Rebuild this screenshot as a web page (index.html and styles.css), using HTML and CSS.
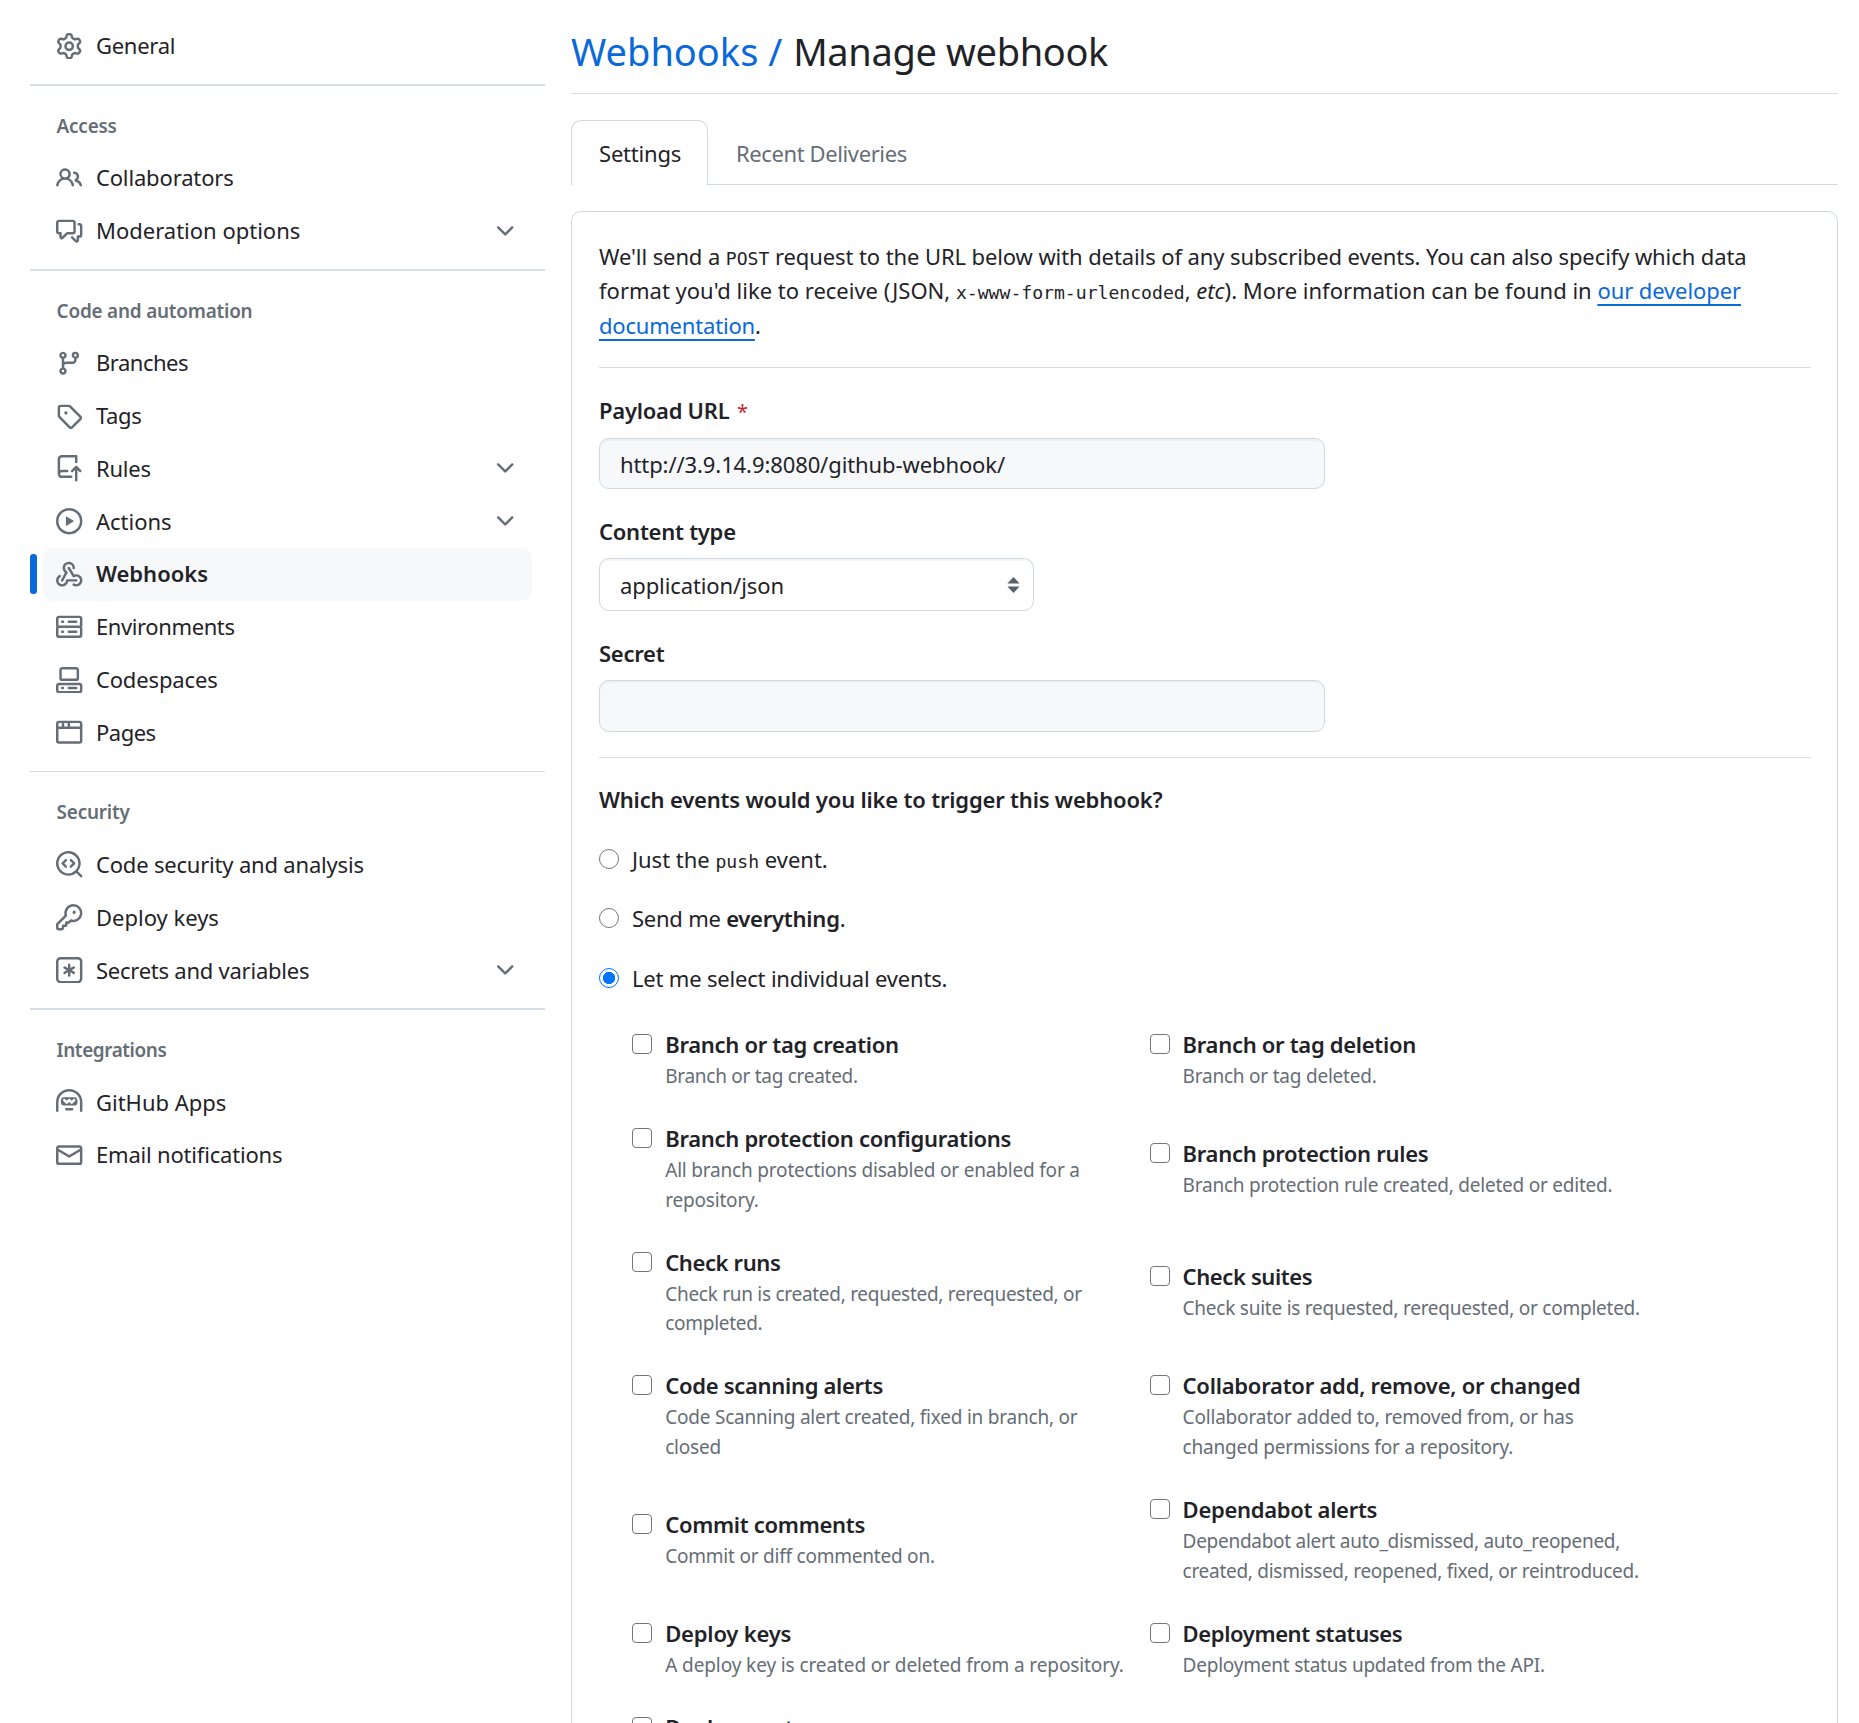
FILE: index.html
```html
<!DOCTYPE html>
<html lang="en">
<head>
<meta charset="utf-8">
<title>Webhooks · Manage webhook</title>
<link rel="stylesheet" href="styles.css">
</head>
<body>
<div class="layout">
  <nav class="sidebar">
    <ul class="nav-list">
      <li class="nav-item"><svg class="icon" viewBox="0 0 16 16"><path d="M8 0a8.2 8.2 0 0 1 .701.031C9.444.095 9.99.645 10.16 1.29l.288 1.107c.018.066.079.158.212.224.231.114.454.243.668.386.123.082.233.09.299.071l1.103-.303c.644-.176 1.392.021 1.82.63.27.385.506.792.704 1.218.315.675.111 1.422-.364 1.891l-.814.806c-.049.048-.098.147-.088.294.016.257.016.515 0 .772-.01.147.038.246.088.294l.814.806c.475.469.679 1.216.364 1.891a7.977 7.977 0 0 1-.704 1.217c-.428.61-1.176.807-1.82.63l-1.102-.302c-.067-.019-.177-.011-.3.071a5.909 5.909 0 0 1-.668.386c-.133.066-.194.158-.211.224l-.29 1.106c-.168.646-.715 1.196-1.458 1.26a8.006 8.006 0 0 1-1.402 0c-.743-.064-1.289-.614-1.458-1.26l-.289-1.106c-.018-.066-.079-.158-.212-.224a5.738 5.738 0 0 1-.668-.386c-.123-.082-.233-.09-.299-.071l-1.103.303c-.644.176-1.392-.021-1.82-.63a8.12 8.12 0 0 1-.704-1.218c-.315-.675-.111-1.422.363-1.891l.815-.806c.05-.048.098-.147.088-.294a6.214 6.214 0 0 1 0-.772c.01-.147-.038-.246-.088-.294l-.815-.806C.635 6.045.431 5.298.746 4.623a7.92 7.92 0 0 1 .704-1.217c.428-.61 1.176-.807 1.82-.63l1.102.302c.067.019.177.011.3-.071.214-.143.437-.272.668-.386.133-.066.194-.158.211-.224l.29-1.106C6.009.645 6.556.095 7.299.03 7.53.01 7.764 0 8 0Zm-.571 1.525c-.036.003-.108.036-.137.146l-.289 1.105c-.147.561-.549.967-.998 1.189-.173.086-.34.183-.5.29-.417.278-.97.423-1.529.27l-1.103-.303c-.109-.03-.175.016-.195.045-.22.312-.412.644-.573.99-.014.031-.021.11.059.19l.815.806c.411.406.562.957.53 1.456a4.709 4.709 0 0 0 0 .582c.032.499-.119 1.05-.53 1.456l-.815.806c-.081.08-.073.159-.059.19.162.346.353.677.573.989.02.03.085.076.195.046l1.102-.303c.56-.153 1.113-.008 1.53.27.161.107.328.204.501.29.447.222.85.629.997 1.189l.289 1.105c.029.109.101.143.137.146a6.6 6.6 0 0 0 1.142 0c.036-.003.108-.036.137-.146l.289-1.105c.147-.561.549-.967.998-1.189.173-.086.34-.183.5-.29.417-.278.97-.423 1.529-.27l1.103.303c.109.029.175-.016.195-.045.22-.313.411-.644.573-.99.014-.031.021-.11-.059-.19l-.815-.806c-.411-.406-.562-.957-.53-1.456a4.709 4.709 0 0 0 0-.582c-.032-.499.119-1.05.53-1.456l.815-.806c.081-.08.073-.159.059-.19a6.464 6.464 0 0 0-.573-.989c-.02-.03-.085-.076-.195-.046l-1.102.303c-.56.153-1.113.008-1.53-.27a4.44 4.44 0 0 0-.501-.29c-.447-.222-.85-.629-.997-1.189l-.289-1.105c-.029-.11-.101-.143-.137-.146a6.6 6.6 0 0 0-1.142 0ZM11 8a3 3 0 1 1-6 0 3 3 0 0 1 6 0ZM9.5 8a1.5 1.5 0 1 0-3.001.001A1.5 1.5 0 0 0 9.5 8Z"/></svg><span class="nav-label tight-3">General</span></li>
    </ul>
    <section class="nav-section">
      <h3 class="nav-heading">Access</h3>
      <ul class="nav-list">
        <li class="nav-item"><svg class="icon" viewBox="0 0 16 16"><path d="M2 5.5a3.5 3.5 0 1 1 5.898 2.549 5.508 5.508 0 0 1 3.034 4.084.75.75 0 1 1-1.482.235 4 4 0 0 0-7.9 0 .75.75 0 0 1-1.482-.236A5.507 5.507 0 0 1 3.102 8.05 3.493 3.493 0 0 1 2 5.5ZM11 4a3.001 3.001 0 0 1 2.22 5.018 5.01 5.01 0 0 1 2.56 3.012.749.749 0 0 1-.885.954.752.752 0 0 1-.549-.514 3.507 3.507 0 0 0-2.522-2.372.75.75 0 0 1-.574-.73v-.352a.75.75 0 0 1 .416-.672A1.5 1.5 0 0 0 11 5.5.75.75 0 0 1 11 4Zm-5.5-.5a2 2 0 1 0-.001 3.999A2 2 0 0 0 5.5 3.5Z"/></svg><span class="nav-label">Collaborators</span></li>
        <li class="nav-item"><svg class="icon" viewBox="0 0 16 16"><path d="M1.75 1h8.5c.966 0 1.75.784 1.75 1.75v5.5A1.75 1.75 0 0 1 10.25 10H7.061l-2.574 2.573A1.458 1.458 0 0 1 2 11.543V10h-.25A1.75 1.75 0 0 1 0 8.25v-5.5C0 1.784.784 1 1.75 1ZM1.5 2.75v5.5c0 .138.112.25.25.25h1a.75.75 0 0 1 .75.75v2.19l2.72-2.72a.749.749 0 0 1 .53-.22h3.5a.25.25 0 0 0 .25-.25v-5.5a.25.25 0 0 0-.25-.25h-8.5a.25.25 0 0 0-.25.25Zm13 2a.25.25 0 0 0-.25-.25h-.5a.75.75 0 0 1 0-1.5h.5c.966 0 1.75.784 1.75 1.75v5.5A1.75 1.75 0 0 1 14.25 12H14v1.543a1.458 1.458 0 0 1-2.487 1.03L9.22 12.28a.749.749 0 0 1 .326-1.275.749.749 0 0 1 .734.215l2.22 2.22v-2.19a.75.75 0 0 1 .75-.75h1a.25.25 0 0 0 .25-.25Z"/></svg><span class="nav-label tight-0">Moderation options</span><svg class="icon chevron" viewBox="0 0 16 16"><path d="M12.78 5.22a.749.749 0 0 1 0 1.06l-4.25 4.25a.749.749 0 0 1-1.06 0L3.22 6.28a.749.749 0 1 1 1.06-1.06L8 8.939l3.72-3.719a.749.749 0 0 1 1.06 0Z"/></svg></li>
      </ul>
    </section>
    <section class="nav-section">
      <h3 class="nav-heading">Code and automation</h3>
      <ul class="nav-list">
        <li class="nav-item"><svg class="icon" viewBox="0 0 16 16"><path d="M9.5 3.25a2.25 2.25 0 1 1 3 2.122V6A2.5 2.5 0 0 1 10 8.5H6a1 1 0 0 0-1 1v1.128a2.251 2.251 0 1 1-1.5 0V5.372a2.25 2.25 0 1 1 1.5 0v1.836A2.493 2.493 0 0 1 6 7h4a1 1 0 0 0 1-1v-.628A2.25 2.25 0 0 1 9.5 3.25Zm-6 0a.75.75 0 1 0 1.5 0 .75.75 0 0 0-1.5 0Zm8.25-.75a.75.75 0 1 0 0 1.5.75.75 0 0 0 0-1.5ZM4.25 12a.75.75 0 1 0 0 1.5.75.75 0 0 0 0-1.5Z"/></svg><span class="nav-label tight-5">Branches</span></li>
        <li class="nav-item"><svg class="icon" viewBox="0 0 16 16"><path d="M1 7.775V2.75C1 1.784 1.784 1 2.75 1h5.025c.464 0 .91.184 1.238.513l6.25 6.25a1.75 1.75 0 0 1 0 2.474l-5.026 5.026a1.75 1.75 0 0 1-2.474 0l-6.25-6.25A1.752 1.752 0 0 1 1 7.775Zm1.5 0c0 .066.026.13.073.177l6.25 6.25a.25.25 0 0 0 .354 0l5.025-5.025a.25.25 0 0 0 0-.354l-6.25-6.25a.25.25 0 0 0-.177-.073H2.75a.25.25 0 0 0-.25.25ZM6 5a1 1 0 1 1 0 2 1 1 0 0 1 0-2Z"/></svg><span class="nav-label tight-4">Tags</span></li>
        <li class="nav-item"><svg class="icon" viewBox="0 0 16 16"><path d="M1 2.5A2.5 2.5 0 0 1 3.5 0h8.75a.75.75 0 0 1 .75.75v3.5a.75.75 0 0 1-1.5 0V1.5h-8a1 1 0 0 0-1 1v6.708A2.493 2.493 0 0 1 3.5 9h3.25a.75.75 0 0 1 0 1.5H3.5a1 1 0 0 0 0 2h5.75a.75.75 0 0 1 0 1.5H3.5A2.5 2.5 0 0 1 1 11.5Zm13.23 7.79h-.001l-1.224-1.224v6.184a.75.75 0 0 1-1.5 0V9.066L10.28 10.29a.75.75 0 0 1-1.06-1.061l2.505-2.504a.75.75 0 0 1 1.06 0L15.29 9.23a.751.751 0 0 1-.018 1.042.751.751 0 0 1-1.042.018Z"/></svg><span class="nav-label tight-2">Rules</span><svg class="icon chevron" viewBox="0 0 16 16"><path d="M12.78 5.22a.749.749 0 0 1 0 1.06l-4.25 4.25a.749.749 0 0 1-1.06 0L3.22 6.28a.749.749 0 1 1 1.06-1.06L8 8.939l3.72-3.719a.749.749 0 0 1 1.06 0Z"/></svg></li>
        <li class="nav-item"><svg class="icon" viewBox="0 0 16 16"><path d="M8 0a8 8 0 1 1 0 16A8 8 0 0 1 8 0ZM1.5 8a6.5 6.5 0 1 0 13 0 6.5 6.5 0 0 0-13 0Zm4.879-2.773 4.264 2.559a.25.25 0 0 1 0 .428l-4.264 2.559A.25.25 0 0 1 6 10.559V5.442a.25.25 0 0 1 .379-.215Z"/></svg><span class="nav-label tight-0">Actions</span><svg class="icon chevron" viewBox="0 0 16 16"><path d="M12.78 5.22a.749.749 0 0 1 0 1.06l-4.25 4.25a.749.749 0 0 1-1.06 0L3.22 6.28a.749.749 0 1 1 1.06-1.06L8 8.939l3.72-3.719a.749.749 0 0 1 1.06 0Z"/></svg></li>
        <li class="nav-item is-current"><svg class="icon" viewBox="0 0 16 16"><path d="M5.5 4.25a2.25 2.25 0 0 1 4.5 0 .75.75 0 0 0 1.5 0 3.75 3.75 0 1 0-6.14 2.889l-2.272 4.258a.75.75 0 0 0 1.324.706L7 7.25a.75.75 0 0 0-.309-1.015A2.25 2.25 0 0 1 5.5 4.25Z"/><path d="M7.364 3.607a.75.75 0 0 1 1.03.257l2.608 4.349a3.75 3.75 0 1 1-.628 6.785.75.75 0 0 1 .752-1.299 2.25 2.25 0 1 0-.033-3.88.75.75 0 0 1-1.03-.256L7.107 4.636a.75.75 0 0 1 .257-1.03Z"/><path d="M2.9 8.776A.75.75 0 0 1 2.625 9.8 2.25 2.25 0 1 0 6 11.75a.75.75 0 0 1 .75-.751h5.5a.75.75 0 0 1 0 1.5H7.425a3.751 3.751 0 1 1-5.55-3.998.75.75 0 0 1 1.024.274Z"/></svg><span class="nav-label tight-0">Webhooks</span></li>
        <li class="nav-item"><svg class="icon" viewBox="0 0 16 16"><path d="M1.75 1h12.5c.966 0 1.75.784 1.75 1.75v4c0 .372-.116.717-.314 1 .198.283.314.628.314 1v4a1.75 1.75 0 0 1-1.75 1.75H1.75A1.75 1.75 0 0 1 0 12.75v-4c0-.358.109-.707.314-1a1.739 1.739 0 0 1-.314-1v-4C0 1.784.784 1 1.75 1ZM1.5 2.75v4c0 .138.112.25.25.25h12.5a.25.25 0 0 0 .25-.25v-4a.25.25 0 0 0-.25-.25H1.75a.25.25 0 0 0-.25.25Zm.25 5.75a.25.25 0 0 0-.25.25v4c0 .138.112.25.25.25h12.5a.25.25 0 0 0 .25-.25v-4a.25.25 0 0 0-.25-.25ZM7 4.75A.75.75 0 0 1 7.75 4h4.5a.75.75 0 0 1 0 1.5h-4.5A.75.75 0 0 1 7 4.75ZM7.75 10h4.5a.75.75 0 0 1 0 1.5h-4.5a.75.75 0 0 1 0-1.5ZM3 4.75A.75.75 0 0 1 3.75 4h.5a.75.75 0 0 1 0 1.5h-.5A.75.75 0 0 1 3 4.75ZM3.75 10h.5a.75.75 0 0 1 0 1.5h-.5a.75.75 0 0 1 0-1.5Z"/></svg><span class="nav-label tight-4">Environments</span></li>
        <li class="nav-item"><svg class="icon" viewBox="0 0 16 16"><path d="M0 11.25c0-.966.784-1.75 1.75-1.75h12.5c.966 0 1.75.784 1.75 1.75v3A1.75 1.75 0 0 1 14.25 16H1.75A1.75 1.75 0 0 1 0 14.25Zm2-9.5C2 .784 2.784 0 3.75 0h8.5C13.216 0 14 .784 14 1.75v5a1.75 1.75 0 0 1-1.75 1.75h-8.5A1.75 1.75 0 0 1 2 6.75Zm1.75-.25a.25.25 0 0 0-.25.25v5c0 .138.112.25.25.25h8.5a.25.25 0 0 0 .25-.25v-5a.25.25 0 0 0-.25-.25Zm-2 9.5a.25.25 0 0 0-.25.25v3c0 .138.112.25.25.25h12.5a.25.25 0 0 0 .25-.25v-3a.25.25 0 0 0-.25-.25Z"/><path d="M7 12.75a.75.75 0 0 1 .75-.75h4.5a.75.75 0 0 1 0 1.5h-4.5a.75.75 0 0 1-.75-.75Zm-4 0a.75.75 0 0 1 .75-.75h.5a.75.75 0 0 1 0 1.5h-.5a.75.75 0 0 1-.75-.75Z"/></svg><span class="nav-label">Codespaces</span></li>
        <li class="nav-item"><svg class="icon" viewBox="0 0 16 16"><path d="M0 2.75C0 1.784.784 1 1.75 1h12.5c.966 0 1.75.784 1.75 1.75v10.5A1.75 1.75 0 0 1 14.25 15H1.75A1.75 1.75 0 0 1 0 13.25ZM14.5 6h-13v7.25c0 .138.112.25.25.25h12.5a.25.25 0 0 0 .25-.25Zm-6-3.5v2h6V2.75a.25.25 0 0 0-.25-.25ZM5 2.5v2h2v-2Zm-3.25 0a.25.25 0 0 0-.25.25V4.5h2v-2Z"/></svg><span class="nav-label tight-5">Pages</span></li>
      </ul>
    </section>
    <section class="nav-section">
      <h3 class="nav-heading">Security</h3>
      <ul class="nav-list">
        <li class="nav-item"><svg class="icon" viewBox="0 0 16 16"><path d="M8.47 4.97a.75.75 0 0 0 0 1.06L9.94 7.5 8.47 8.97a.75.75 0 1 0 1.06 1.06l2-2a.75.75 0 0 0 0-1.06l-2-2a.75.75 0 0 0-1.06 0ZM6.53 6.03a.75.75 0 0 0-1.06-1.06l-2 2a.75.75 0 0 0 0 1.06l2 2a.75.75 0 1 0 1.06-1.06L5.06 7.5l1.47-1.47Z"/><path d="M12.246 13.307a7.501 7.501 0 1 1 1.06-1.06l2.474 2.473a.749.749 0 0 1-.326 1.275.749.749 0 0 1-.734-.215ZM1.5 7.5a6.002 6.002 0 0 0 3.608 5.504 6.002 6.002 0 0 0 6.486-1.117.748.748 0 0 1 .292-.293A6 6 0 1 0 1.5 7.5Z"/></svg><span class="nav-label tight-2">Code security and analysis</span></li>
        <li class="nav-item"><svg class="icon" viewBox="0 0 16 16"><path d="M10.5 0a5.499 5.499 0 1 1-1.288 10.848l-.932.932a.749.749 0 0 1-.53.22H7v.75a.749.749 0 0 1-.22.53l-.5.5a.749.749 0 0 1-.53.22H5v.75a.749.749 0 0 1-.22.53l-.5.5a.749.749 0 0 1-.53.22h-2A1.75 1.75 0 0 1 0 14.25v-2c0-.199.079-.389.22-.53l4.932-4.932A5.5 5.5 0 0 1 10.5 0Zm-4 5.5c-.001.431.069.86.205 1.269a.75.75 0 0 1-.181.768L1.5 12.56v1.69c0 .138.112.25.25.25h1.69l.06-.06v-1.19a.75.75 0 0 1 .75-.75h1.19l.06-.06v-1.19a.75.75 0 0 1 .75-.75h1.19l1.023-1.025a.75.75 0 0 1 .768-.18A4 4 0 1 0 6.5 5.5ZM11 6a1 1 0 1 1 0-2 1 1 0 0 1 0 2Z"/></svg><span class="nav-label tight-0">Deploy keys</span></li>
        <li class="nav-item"><svg class="icon" viewBox="0 0 16 16"><path d="M0 2.75A2.75 2.75 0 0 1 2.75 0h10.5A2.75 2.75 0 0 1 16 2.75v10.5A2.75 2.75 0 0 1 13.25 16H2.75A2.75 2.75 0 0 1 0 13.25ZM2.75 1.5c-.69 0-1.25.56-1.25 1.25v10.5c0 .69.56 1.25 1.25 1.25h10.5c.69 0 1.25-.56 1.25-1.25V2.75c0-.69-.56-1.25-1.25-1.25Z"/><path d="M8 4a.75.75 0 0 1 .75.75V6.7l1.69-.975a.75.75 0 0 1 .75 1.3L9.5 8l1.69.976a.75.75 0 0 1-.75 1.298L8.75 9.3v1.951a.75.75 0 0 1-1.5 0V9.299l-1.69.976a.75.75 0 0 1-.75-1.3L6.5 8l-1.69-.975a.75.75 0 0 1 .75-1.3l1.69.976V4.75A.75.75 0 0 1 8 4Z"/></svg><span class="nav-label tight-25">Secrets and variables</span><svg class="icon chevron" viewBox="0 0 16 16"><path d="M12.78 5.22a.749.749 0 0 1 0 1.06l-4.25 4.25a.749.749 0 0 1-1.06 0L3.22 6.28a.749.749 0 1 1 1.06-1.06L8 8.939l3.72-3.719a.749.749 0 0 1 1.06 0Z"/></svg></li>
      </ul>
    </section>
    <section class="nav-section">
      <h3 class="nav-heading tight-4">Integrations</h3>
      <ul class="nav-list">
        <li class="nav-item"><svg class="icon" viewBox="0 0 16 16"><path d="M0 8a8 8 0 1 1 16 0v5.25a.75.75 0 0 1-1.5 0V8a6.5 6.5 0 1 0-13 0v5.25a.75.75 0 0 1-1.5 0V8Zm5.5 4.25a.75.75 0 0 1 .75-.75h3.5a.75.75 0 0 1 0 1.5h-3.5a.75.75 0 0 1-.75-.75ZM3 6.75C3 5.784 3.784 5 4.75 5h6.5c.966 0 1.75.784 1.75 1.75v1.5A1.75 1.75 0 0 1 11.25 10h-6.5A1.75 1.75 0 0 1 3 8.25Zm1.47-.53a.75.75 0 0 0 0 1.06l1.5 1.5a.75.75 0 0 0 1.06 0L8 7.81l.97.97a.75.75 0 0 0 1.06 0l1.5-1.5a.75.75 0 0 0-1.06-1.06l-.97.97-.97-.97a.75.75 0 0 0-1.06 0l-.97.97-.97-.97a.75.75 0 0 0-1.06 0Z"/></svg><span class="nav-label tight-0">GitHub Apps</span></li>
        <li class="nav-item"><svg class="icon" viewBox="0 0 16 16"><path d="M1.75 2h12.5c.966 0 1.75.784 1.75 1.75v8.5A1.75 1.75 0 0 1 14.25 14H1.75A1.75 1.75 0 0 1 0 12.25v-8.5C0 2.784.784 2 1.75 2ZM1.5 12.251c0 .138.112.25.25.25h12.5a.25.25 0 0 0 .25-.25V5.809L8.38 9.397a.75.75 0 0 1-.76 0L1.5 5.809v6.442Zm13-8.181v-.32a.25.25 0 0 0-.25-.25H1.75a.25.25 0 0 0-.25.25v.32L8 7.88Z"/></svg><span class="nav-label tight-2">Email notifications</span></li>
      </ul>
    </section>
  </nav>

  <main class="content">
    <h1 class="page-title"><a class="title-link">Webhooks /</a> <span class="title-text">Manage webhook</span></h1>
    <div class="tabs">
      <a class="tab is-selected tight-2">Settings</a>
      <a class="tab tight-4">Recent Deliveries</a>
    </div>
    <form class="panel">
      <p class="intro"><span class="tight-1">We'll send a <code>POST</code> request to the URL below with details of any subscribed events. You can also specify which data</span><br>format you'd like to receive (JSON, <code>x-www-form-urlencoded</code>, <em>etc</em>). More information can be found in <a class="doc-link tight-1">our developer</a><br><a class="doc-link tight-2">documentation</a>.</p>
      <div class="form-group ruled">
        <label class="field-label">Payload URL <span class="required">*</span></label>
        <div class="text-field url-field"><span class="tight-1">http://3.9.14.9:8080/github-webhook/</span></div>
      </div>
      <div class="form-group">
        <label class="field-label">Content type</label>
        <div class="select-field"><span class="tight-1">application/json</span><svg class="select-arrows" viewBox="0 0 13 16"><path d="M6.5 0 12.6 6.6H.4ZM6.5 16 .4 9.4h12.2Z"/></svg></div>
      </div>
      <div class="form-group">
        <label class="field-label">Secret</label>
        <div class="text-field"></div>
      </div>
      <div class="events ruled">
        <p class="question tight-2">Which events would you like to trigger this webhook?</p>
        <label class="radio-row"><input type="radio" name="events"><span>Just the <code>push</code> event.</span></label>
        <label class="radio-row"><input type="radio" name="events"><span class="tight-25">Send me <strong>everything</strong>.</span></label>
        <label class="radio-row"><input type="radio" name="events" checked><span class="tight-2">Let me select individual events.</span></label>
        <div class="event-grid">
          <label class="event"><input type="checkbox"><span class="event-text"><strong>Branch or tag creation</strong><span class="note tight-3">Branch or tag created.</span></span></label>
          <label class="event"><input type="checkbox"><span class="event-text"><strong>Branch or tag deletion</strong><span class="note">Branch or tag deleted.</span></span></label>
          <label class="event"><input type="checkbox"><span class="event-text"><strong>Branch protection configurations</strong><span class="note tight-2">All branch protections disabled or enabled for a<br>repository.</span></span></label>
          <label class="event"><input type="checkbox"><span class="event-text"><strong>Branch protection rules</strong><span class="note">Branch protection rule created, deleted or edited.</span></span></label>
          <label class="event"><input type="checkbox"><span class="event-text"><strong class="tight-4">Check runs</strong><span class="note tight-3">Check run is created, requested, rerequested, or<br>completed.</span></span></label>
          <label class="event"><input type="checkbox"><span class="event-text"><strong class="tight-4">Check suites</strong><span class="note tight-25">Check suite is requested, rerequested, or completed.</span></span></label>
          <label class="event"><input type="checkbox"><span class="event-text"><strong>Code scanning alerts</strong><span class="note">Code Scanning alert created, fixed in branch, or<br>closed</span></span></label>
          <label class="event"><input type="checkbox"><span class="event-text"><strong class="tight-25">Collaborator add, remove, or changed</strong><span class="note tight-2">Collaborator added to, removed from, or has<br>changed permissions for a repository.</span></span></label>
          <label class="event"><input type="checkbox"><span class="event-text"><strong>Commit comments</strong><span class="note">Commit or diff commented on.</span></span></label>
          <label class="event"><input type="checkbox"><span class="event-text"><strong>Dependabot alerts</strong><span class="note tight-3">Dependabot alert auto_dismissed, auto_reopened,<br>created, dismissed, reopened, fixed, or reintroduced.</span></span></label>
          <label class="event"><input type="checkbox"><span class="event-text"><strong class="tight-2">Deploy keys</strong><span class="note tight-1">A deploy key is created or deleted from a repository.</span></span></label>
          <label class="event"><input type="checkbox"><span class="event-text"><strong class="tight-4">Deployment statuses</strong><span class="note">Deployment status updated from the API.</span></span></label>
          <label class="event"><input type="checkbox"><span class="event-text"><strong>Deployments</strong></span></label>
        </div>
      </div>
    </form>
  </main>
</div>
</body>
</html>
```
FILE: styles.css
```css
* { box-sizing: border-box; }

body {
  margin: 0;
  height: 1723px;
  overflow: hidden;
  background: #fff;
  color: #1f2328;
  font: 400 22px/34.65px "Noto Sans", "Open Sans", sans-serif;
  white-space: nowrap;
}

h1, h3, p, ul { margin: 0; padding: 0; }
ul { list-style: none; }
strong { font-weight: 600; }

.layout {
  display: flex;
  gap: 26px;
  height: 1723px;
  overflow: hidden;
  padding: 0 21px 0 30px;
}

/* Sidebar */
.sidebar {
  width: 515px;
  flex: none;
  padding-top: 19.6px;
}

.nav-item {
  position: relative;
  display: flex;
  align-items: center;
  gap: 13.2px;
  height: 52.8px;
  margin: 0 13.2px;
  padding: 0 13.2px;
  border-radius: 9.9px;
}

.nav-label {
  padding-bottom: 0.6px;
  letter-spacing: -0.15px;
}

.nav-item.is-current {
  background: #f6f8fa;
  font-weight: 600;
}

.nav-item.is-current::before {
  content: "";
  position: absolute;
  left: -13.2px;
  top: 6.6px;
  width: 6.6px;
  height: 39.6px;
  border-radius: 3.3px;
  background: #0969da;
}

.icon {
  flex: none;
  width: 26.4px;
  height: 26.4px;
  fill: #656d76;
}

.chevron { margin-left: auto; }

.nav-section { margin-top: 11.7px; }

.nav-section::before {
  content: "";
  display: block;
  height: 1.65px;
  background: #d8dee4;
}

.nav-heading {
  height: 65.95px;
  padding: 25px 0 0 26.6px;
  color: #656d76;
  font-size: 18.9px;
  font-weight: 600;
  line-height: 30px;
  letter-spacing: -0.2px;
}

/* Main column */
.content {
  flex: 1;
  padding-top: 21px;
}

.page-title {
  height: 73px;
  border-bottom: 1px solid #d8dee4;
  font-size: 38px;
  font-weight: 400;
  line-height: 60px;
}

.title-link { color: #0969da; }

.title-text {
  margin-left: 1px;
  letter-spacing: -0.35px;
}

.tabs {
  display: flex;
  height: 65px;
  margin-top: 26px;
  border-bottom: 1px solid #d0d7de;
}

.tab {
  height: 65px;
  padding: 14.8px 27px 0;
  border: 1px solid transparent;
  border-bottom: 0;
  color: #656d76;
}

.tab.is-selected {
  width: 137px;
  border-color: #d0d7de;
  border-radius: 9.9px 9.9px 0 0;
  background: #fff;
  color: #1f2328;
}

.panel {
  height: 1600px;
  margin-top: 26px;
  padding: 26.6px 26.4px 0 27px;
  border: 1px solid #d0d7de;
  border-radius: 9.9px;
}

code {
  font: 18.1px/1 "DejaVu Sans Mono", monospace;
  letter-spacing: 0;
}

.doc-link {
  color: #0969da;
  text-decoration: underline;
  text-decoration-thickness: 2px;
  text-underline-offset: 5px;
  text-decoration-skip-ink: none;
}

.ruled { border-top: 1px solid #d8dee4; }

.form-group { padding-top: 25px; }
.form-group.ruled { margin-top: 24.4px; }

.field-label {
  display: block;
  height: 35px;
  font-weight: 600;
  letter-spacing: -0.25px;
}

.required {
  margin-left: 2px;
  color: #cf222e;
  font-size: 20px;
  font-weight: 400;
}

.text-field,
.select-field {
  display: flex;
  align-items: center;
  width: 726px;
  height: 52px;
  margin-top: 9px;
  padding: 1px 20px 0;
  border: 1px solid #d0d7de;
  border-radius: 9.9px;
  background: #f6f8fa;
  box-shadow: inset 0 2px 0 rgba(208, 215, 222, 0.2);
}

.url-field {
  height: 51px;
  margin-top: 10px;
}

.select-field {
  justify-content: space-between;
  width: 435px;
  height: 53px;
  padding-right: 13px;
  background: #fff;
}

.select-arrows {
  width: 13px;
  height: 16px;
  fill: #57606a;
}

/* Events */
.events {
  margin-top: 25px;
  padding-top: 24.4px;
}

.question { font-weight: 600; }

.radio-row {
  display: flex;
  gap: 13px;
  height: 35px;
  margin-top: 24.6px;
}

input {
  appearance: none;
  flex: none;
  width: 20px;
  height: 20px;
  margin: 7px 0 0;
  border: 1.65px solid #767676;
  background: #fff;
}

input[type="radio"] { border-radius: 50%; }

input[type="radio"]:checked {
  border-color: #0075ff;
  background: radial-gradient(circle, #0075ff 5.8px, #fff 6.4px);
}

input[type="checkbox"] { border-radius: 4px; }

.event-grid {
  display: grid;
  grid-template-columns: 517.4px 1fr;
  row-gap: 29.35px;
  align-items: center;
  margin-top: 31px;
  padding-left: 33.2px;
}

.event {
  display: flex;
  gap: 13px;
}

.event-text {
  display: grid;
  justify-items: start;
  line-height: 34px;
}

.event-text strong { letter-spacing: -0.3px; }

.note {
  margin-top: 1px;
  color: #656d76;
  font-size: 19px;
  line-height: 29.7px;
  letter-spacing: -0.22px;
}

/* Tracking adjustments */
.nav-label.tight-0 { letter-spacing: 0; }
.tight-1, .note.tight-1 { letter-spacing: -0.1px; }
.tight-2, .note.tight-2, .event-text .tight-2, .nav-label.tight-2 { letter-spacing: -0.19px; }
.tight-25, .note.tight-25, .event-text .tight-25, .nav-label.tight-25 { letter-spacing: -0.24px; }
.note.tight-3, .nav-label.tight-3 { letter-spacing: -0.28px; }
.tight-4, .event-text .tight-4, .nav-label.tight-4, .nav-heading.tight-4 { letter-spacing: -0.39px; }
.nav-label.tight-5 { letter-spacing: -0.48px; }
```
